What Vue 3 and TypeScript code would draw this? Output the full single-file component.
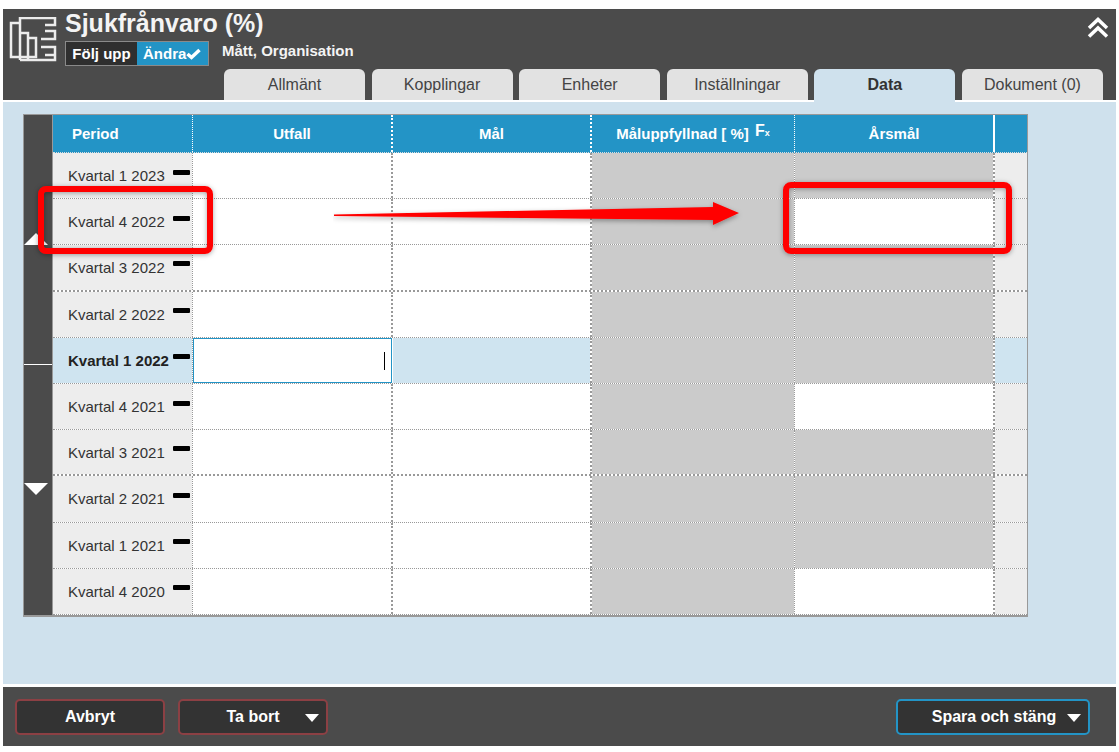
<script setup lang="ts">
interface Row { label: string; goalOpen: boolean; active?: boolean }
const rows: Row[] = [
  { label: 'Kvartal 1 2023', goalOpen: false },
  { label: 'Kvartal 4 2022', goalOpen: true },
  { label: 'Kvartal 3 2022', goalOpen: false },
  { label: 'Kvartal 2 2022', goalOpen: false },
  { label: 'Kvartal 1 2022', goalOpen: false, active: true },
  { label: 'Kvartal 4 2021', goalOpen: true },
  { label: 'Kvartal 3 2021', goalOpen: false },
  { label: 'Kvartal 2 2021', goalOpen: false },
  { label: 'Kvartal 1 2021', goalOpen: false },
  { label: 'Kvartal 4 2020', goalOpen: true },
]
const tabs = ['Allmänt', 'Kopplingar', 'Enheter', 'Inställningar', 'Data', 'Dokument (0)']
</script>

<template>
  <div class="page">
    <header class="head">
      <div class="head-top">
        <svg class="logo" width="50" height="46" viewBox="0 0 50 46" fill="none" stroke="#ececec" stroke-width="2.500">
          <path d="M11 43V1H46V8H36M36 14H46V22H32M32 30H46V38H36M36 38M46 38V43H11" />
          <path d="M11 6H2V40H27V21H19M11 16H19V43" />
        </svg>
        <div class="head-text">
          <h1>Sjukfrånvaro (%)</h1>
          <div class="sub">
            <div class="toggle">
              <span class="tg-off">Följ upp</span>
              <span class="tg-on">Ändra<svg width="15" height="12" viewBox="0 0 15 12"><path d="M1.500 6 5.500 9.500 13.500 2" fill="none" stroke="#fff" stroke-width="3.500" /></svg></span>
            </div>
            <span class="crumb">Mått, Organisation</span>
          </div>
        </div>
        <svg class="collapse" width="22" height="21" viewBox="0 0 22 21" fill="none" stroke="#fff" stroke-width="3.500">
          <path d="M2 11 11 2.500 20 11M2 19.500 11 11 20 19.500" />
        </svg>
      </div>
      <nav class="tabs">
        <span v-for="t in tabs" :key="t" class="tab" :class="{ sel: t === 'Data' }">{{ t }}</span>
      </nav>
    </header>

    <main class="body">
      <div class="table">
        <div class="rail">
          <i class="tri up"></i>
          <i class="rail-line"></i>
          <i class="tri down"></i>
        </div>
        <div class="grid">
          <div class="hrow">
            <div class="hc c-period left">Period</div>
            <div class="hc c-wide wide-line">Utfall</div>
            <div class="hc c-val wide-line">Mål</div>
            <div class="hc c-fill">Måluppfyllnad [ %] <span class="fx">F<small>x</small></span></div>
            <div class="hc c-wide solid">Årsmål</div>
            <div class="hc c-end"></div>
          </div>
          <div v-for="(r, i) in rows" :key="r.label" class="drow" :class="{ active: r.active, thick: i === 2 || i === 6 }">
            <div class="dc c-period label">
              <span class="lbl">{{ r.label }}</span><i class="dash"></i>
            </div>
            <div class="dc c-wide open wide-line" :class="{ editing: r.active }"><i v-if="r.active" class="caret"></i></div>
            <div class="dc c-val open mal wide-line"></div>
            <div class="dc c-fill grey"></div>
            <div class="dc c-wide wide-line" :class="r.goalOpen ? 'open' : 'grey'"></div>
            <div class="dc c-end endc"></div>
          </div>
        </div>
      </div>

      <div class="mark mark-a"></div>
      <div class="mark mark-b"></div>
      <svg class="arrow" width="420" height="34" viewBox="0 0 420 34">
        <defs>
          <filter id="arrow-shadow" x="-5%" y="-40%" width="110%" height="200%">
            <feDropShadow dx="0" dy="2" stdDeviation="2.500" flood-color="#000" flood-opacity=".35" />
          </filter>
        </defs>
        <path d="M1 13.500 380 6 380 1 406 12 380 24 380 19 1 15Z" fill="#f00" filter="url(#arrow-shadow)" />
      </svg>
    </main>

    <footer class="foot">
      <button class="btn danger wide" type="button">Avbryt</button>
      <button class="btn danger wide has-menu" type="button"><span>Ta bort</span><i class="drop"></i></button>
      <button class="btn save has-menu" type="button"><span>Spara och stäng</span><i class="drop"></i></button>
    </footer>
  </div>
</template>

<style>
html, body { margin: 0; background: #fff; }
</style>

<style scoped>
.page {
  width: 1113px;
  margin: 9px 0 0 3px;
  font-family: "Liberation Sans", Arial, sans-serif;
  color: #222;
}
.head {
  height: 91px;
  background: #4b4b4b;
  display: flex;
  flex-direction: column;
  justify-content: space-between;
}
.head-top { display: flex; padding: 0 7px 0 6px; }
.logo { margin-top: 8px; flex: none; }
.head-text { margin-left: 6px; flex: 1; }
h1 {
  margin: 1px 0 0;
  font-size: 25px;
  line-height: 27px;
  font-weight: 700;
  color: #f4f4f4;
}
.sub { display: flex; align-items: center; margin-top: 4px; }
.toggle {
  display: flex;
  height: 25px;
  width: 144px;
  box-sizing: border-box;
  border: 1px solid #8a8a8a;
  font-size: 15px;
  font-weight: 700;
  line-height: 23px;
  color: #fff;
}
.tg-off { width: 71px; background: #2f2f2f; text-align: center; }
.tg-on { flex: 1; background: #2394c6; padding-left: 6px; display: flex; align-items: center; }
.crumb { margin-left: 13px; font-size: 15px; font-weight: 700; color: #f4f4f4; position: relative; top: -3px; }
.collapse { margin: 8px 0 0; }
.tabs { display: flex; padding-left: 221px; gap: 6.600px; height: 31px; }
.tab {
  width: 141px;
  background: #e2e2e2;
  border-radius: 6px 6px 0 0;
  font-size: 16px;
  line-height: 31px;
  text-align: center;
  color: #444;
}
.tab.sel {
  background: #cfe1ed;
  font-weight: 700;
  color: #333;
  height: 33px;
  position: relative;
  z-index: 1;
}
.body {
  position: relative;
  margin-top: 2px;
  height: 582px;
  background: #cfe1ed;
  padding: 12px 0 0 20px;
  box-sizing: border-box;
}
.table {
  display: flex;
  width: 1005px;
  height: 503px;
  border: 1px solid #999;
  border-bottom-width: 2px;
  box-sizing: border-box;
  background: #ededed;
}
.rail {
  width: 28px;
  background: #4b4b4b;
  border-right: 1px solid #999;
  display: flex;
  flex-direction: column;
  align-items: flex-start;
  flex: none;
}
.tri { width: 0; height: 0; border-left: 12.500px solid transparent; border-right: 12.500px solid transparent; }
.tri.up { border-bottom: 12px solid #fff; margin-top: 118px; }
.rail-line { width: 100%; height: 1px; background: #fff; margin-top: 119px; }
.tri.down { border-top: 12px solid #fff; margin-top: 118px; }
.grid { flex: 1; min-width: 0; }
.hrow, .drow { display: flex; }
.hrow { height: 37px; background: #2394c6; border-bottom: 1px dotted #ddd; }
.hc {
  font-size: 15px;
  font-weight: 700;
  color: #fff;
  text-align: center;
  line-height: 38px;
  box-sizing: border-box;
  border-right: 1px dotted #fff;
}
.hc.left { text-align: left; padding-left: 19px; }
.hc.wide-line { border-right-width: 2px; }
.hc.solid { border-right: 2px solid #fff; }
.hc.c-end { border-right: 0; }
.c-period { width: 140px; flex: none; }
.c-wide { width: 200px; flex: none; }
.c-val { width: 199px; flex: none; }
.c-fill { width: 203px; flex: none; }
.c-end { flex: 1; }
.fx { font-size: 16px; position: relative; top: -3px; margin-left: 2px; }
.fx small { font-size: 9px; }
.drow { height: 46.200px; box-sizing: border-box; border-bottom: 1px dotted #999; background: #fff; }
.drow.thick { border-bottom: 2px dotted #999; }
.dc { box-sizing: border-box; border-right: 1px dotted #999; height: 100%; background-clip: padding-box; }
.dc.wide-line { border-right-width: 2px; }
.dc:last-child { border-right: 0; }
.label {
  display: flex;
  align-items: center;
  padding-left: 15px;
  background-color: #ededed;
  font-size: 15px;
  color: #333;
}
.lbl { width: 105px; flex: none; white-space: nowrap; }
.dash { width: 17px; height: 5px; background: #000; margin: -7px 0 0 0; border-radius: 1px; }
.open { background-color: #fff; }
.grey { background-color: #cbcbcb; }
.endc { background-color: #ededed; }
.active .label, .active .mal, .active .endc { background-color: #cfe4f0; }
.active .label { font-weight: 700; color: #222; }
.dc.editing {
  border: 1px solid #2394c6;
  position: relative;
  height: 45px;
  margin-right: 1px;
  width: 199px;
}
.caret { position: absolute; right: 6px; top: 13px; width: 1px; height: 18px; background: #000; }
.mark {
  position: absolute;
  border: 6px solid #f00;
  border-radius: 8px;
  box-shadow: 0 1px 5px rgba(0, 0, 0, .35), inset 0 1px 5px rgba(0, 0, 0, .35);
  box-sizing: border-box;
  pointer-events: none;
}
.mark-a { left: 35px; top: 84px; width: 175px; height: 68px; }
.mark-b { left: 780px; top: 80px; width: 229px; height: 72px; }
.arrow { position: absolute; left: 330px; top: 99px; }
.foot {
  margin-top: 3px;
  height: 59px;
  background: #4b4b4b;
  display: flex;
  align-items: center;
  gap: 13px;
  padding: 0 26px 0 12px;
  box-sizing: border-box;
}
.btn {
  height: 36px;
  background: #333;
  color: #fff;
  font-family: inherit;
  font-size: 16px;
  font-weight: 700;
  border-radius: 5px;
  padding: 0;
  position: relative;
  box-sizing: border-box;
}
.danger { border: 2px solid #8c4044; }
.wide { width: 150px; }
.save { border: 2px solid #2394c6; width: 194px; margin-left: auto; }
.save span { position: relative; left: 1px; }
.drop {
  position: absolute;
  right: 7px;
  top: 13px;
  width: 0;
  height: 0;
  border-left: 7.500px solid transparent;
  border-right: 7.500px solid transparent;
  border-top: 8px solid #fff;
}
</style>
